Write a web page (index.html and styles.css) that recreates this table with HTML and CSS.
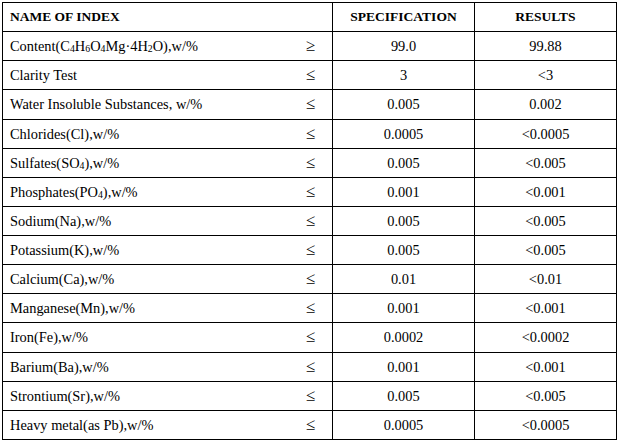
FILE: index.html
```html
<!DOCTYPE html>
<html>
<head>
<meta charset="utf-8">
<link rel="stylesheet" href="styles.css">
</head>
<body>
<table class="spec">
  <colgroup>
    <col class="c-name"><col class="c-spec"><col class="c-res">
  </colgroup>
  <thead>
    <tr><th class="name">NAME OF INDEX</th><th>SPECIFICATION</th><th>RESULTS</th></tr>
  </thead>
  <tbody>
    <tr><td class="name"><span>Content(C<sub>4</sub>H<sub>6</sub>O<sub>4</sub>Mg·4H<sub>2</sub>O),w/%</span><span class="op">≥</span></td><td>99.0</td><td>99.88</td></tr>
    <tr><td class="name"><span>Clarity Test</span><span class="op">≤</span></td><td>3</td><td>&lt;3</td></tr>
    <tr><td class="name"><span>Water Insoluble Substances, w/%</span><span class="op">≤</span></td><td>0.005</td><td>0.002</td></tr>
    <tr><td class="name"><span>Chlorides(Cl),w/%</span><span class="op">≤</span></td><td>0.0005</td><td>&lt;0.0005</td></tr>
    <tr><td class="name"><span>Sulfates(SO<sub>4</sub>),w/%</span><span class="op">≤</span></td><td>0.005</td><td>&lt;0.005</td></tr>
    <tr><td class="name"><span>Phosphates(PO<sub>4</sub>),w/%</span><span class="op">≤</span></td><td>0.001</td><td>&lt;0.001</td></tr>
    <tr><td class="name"><span>Sodium(Na),w/%</span><span class="op">≤</span></td><td>0.005</td><td>&lt;0.005</td></tr>
    <tr><td class="name"><span>Potassium(K),w/%</span><span class="op">≤</span></td><td>0.005</td><td>&lt;0.005</td></tr>
    <tr><td class="name"><span>Calcium(Ca),w/%</span><span class="op">≤</span></td><td>0.01</td><td>&lt;0.01</td></tr>
    <tr><td class="name"><span>Manganese(Mn),w/%</span><span class="op">≤</span></td><td>0.001</td><td>&lt;0.001</td></tr>
    <tr><td class="name"><span>Iron(Fe),w/%</span><span class="op">≤</span></td><td>0.0002</td><td>&lt;0.0002</td></tr>
    <tr><td class="name"><span>Barium(Ba),w/%</span><span class="op">≤</span></td><td>0.001</td><td>&lt;0.001</td></tr>
    <tr><td class="name"><span>Strontium(Sr),w/%</span><span class="op">≤</span></td><td>0.005</td><td>&lt;0.005</td></tr>
    <tr><td class="name"><span>Heavy metal(as Pb),w/%</span><span class="op">≤</span></td><td>0.0005</td><td>&lt;0.0005</td></tr>
  </tbody>
</table>
</body>
</html>
```
FILE: styles.css
```css
html, body {
  background: #fff;
}
body {
  margin: 2px 0 0 2px;
  font-family: "Liberation Serif", "Times New Roman", serif;
  font-size: 14.4px;
  color: #000;
}
.spec {
  border-collapse: collapse;
  table-layout: fixed;
  width: 614px;
}
.c-name { width: 330px; }
.c-spec { width: 142px; }
.c-res { width: 142px; }
.spec th, .spec td {
  border: 1px solid #000;
  height: 28.13px;
  padding: 0;
  text-align: center;
  vertical-align: middle;
  line-height: 16px;
}
.spec th {
  font-weight: bold;
  font-size: 13.5px;
}
.spec .name {
  text-align: left;
  padding-left: 7px;
  padding-right: 17px;
}
.spec td.name span:first-child {
  float: left;
}
.spec .op {
  float: right;
  font-size: 17px;
  line-height: 16px;
}
sub {
  font-size: 0.68em;
  vertical-align: -0.15em;
  line-height: 0;
}
```
